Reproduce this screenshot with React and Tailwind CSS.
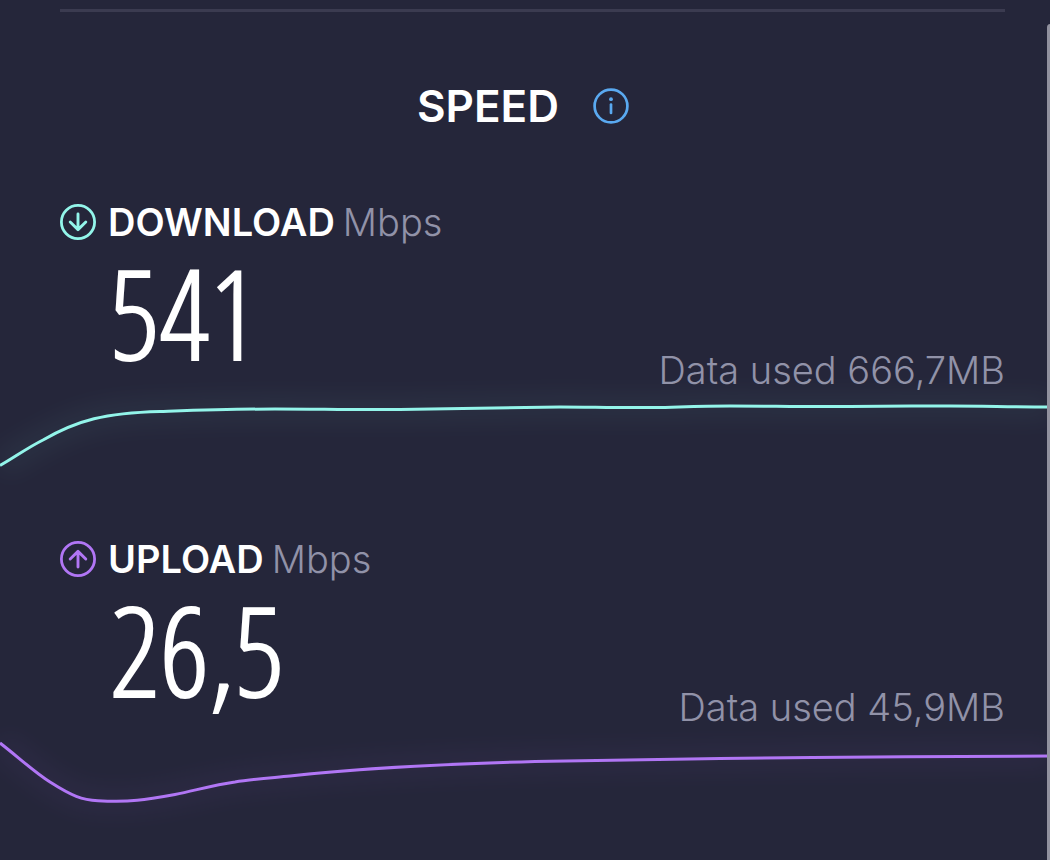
import { useId } from "react";

function DirectionIcon({ up, className }) {
  return (
    <svg viewBox="0 0 36 36" className={`size-9 shrink-0 ${className}`} fill="none" stroke="currentColor" strokeLinecap="round" strokeLinejoin="round" aria-hidden="true">
      <circle cx="18" cy="18" r="16.6" strokeWidth="2.8" />
      <path d={up ? "M18 26V11M10.2 18L18 10.4L25.8 18" : "M18 10V25M10.2 18L18 25.6L25.8 18"} strokeWidth="2.9" />
    </svg>
  );
}

function SpeedCurve({ d, className }) {
  const glowId = useId();
  return (
    <svg viewBox="0 0 1050 112" preserveAspectRatio="none" className={`block h-28 w-full overflow-visible ${className}`} fill="none" stroke="currentColor" aria-hidden="true">
      <defs>
        <filter id={glowId} filterUnits="userSpaceOnUse" x="-60" y="-60" width="1170" height="240">
          <feGaussianBlur stdDeviation="11" />
        </filter>
      </defs>
      <path d={d} strokeWidth="28" opacity="0.045" filter={`url(#${glowId})`} />
      <path d={d} strokeWidth="3" vectorEffect="non-scaling-stroke" />
    </svg>
  );
}

function SpeedResult({ label, value, used, up, color, curve }) {
  return (
    <section>
      <div className="pr-[45px] pl-[60px]">
        <h2 className="flex h-10 items-center text-[38px] leading-10">
          <DirectionIcon up={up} className={color} />
          <span className="ml-3 font-semibold text-white">{label}</span>
          <span className="ml-2 font-light text-[#9192a8]">Mbps</span>
        </h2>
        <div className="flex h-[148px] items-end justify-between">
          <p className="pb-5 pl-[50px] font-['Open_Sans_Condensed_Light','Open_Sans_Cond_Light','Roboto_Condensed','Roboto',sans-serif] text-[124px] leading-[116px] font-light text-white [-webkit-text-stroke:2px_white]">{value}</p>
          <p className="text-[38px] leading-10 font-light text-[#9192a8]">Data used {used}</p>
        </div>
      </div>
      <SpeedCurve d={curve} className={color} />
    </section>
  );
}

export default function App() {
  return (
    <main className="relative min-h-screen overflow-hidden bg-[#25263a] font-['Inter',sans-serif]">
      <hr className="mt-[9px] mr-[45px] ml-[60px] border-t-3 border-[#3b3b50]" />
      <header className="mt-[74px] flex h-10 items-center justify-center gap-[34px] pr-1">
        <h1 className="text-[44px] leading-10 font-semibold text-white">SPEED</h1>
        <button type="button" aria-label="About speed" className="text-[#5aa9f0]">
          <svg viewBox="0 0 36 36" className="block size-9" fill="none" stroke="currentColor" strokeWidth="2.7" aria-hidden="true">
            <circle cx="18" cy="18" r="16.4" />
            <path d="M18 16.5V25" strokeLinecap="round" />
            <circle cx="18" cy="11.2" r="1.9" fill="currentColor" stroke="none" />
          </svg>
        </button>
      </header>
      <div className="mt-[76px] flex flex-col gap-[37px]">
        <SpeedResult
          label="DOWNLOAD"
          value="541"
          used="666,7MB"
          color="text-[#93f5ea]"
          curve="M0 75.5C15 67 27 58 43 50C78 30 105 23 160 21.5C190 20.5 230 19 275 19C320 19 350 20 400 19.5C455 19 500 17.5 560 17C590 17 620 18 655 17.5C680 17 700 16 730 16C770 16 805 17 850 16.5C890 16 915 16 950 16C985 16 1010 17 1050 17"
        />
        <SpeedResult
          up
          label="UPLOAD"
          value="26,5"
          used="45,9MB"
          color="text-[#b176f5]"
          curve="M0 16C17 29 34 45 50 55C72 69 82 73 98 73.7C130 75.5 145 73 175 67.5C195 63.5 214 58 235 55C250 52.5 270 51 290 49C365 40.5 445 37 535 34.5C600 33 655 33 720 31.5C775 31 850 30 905 29.7C955 29.4 1005 29 1050 29"
        />
      </div>
      <div className="absolute top-6 -right-1 bottom-0 w-[7px] rounded-t-full bg-[#91919e]" aria-hidden="true" />
    </main>
  );
}
